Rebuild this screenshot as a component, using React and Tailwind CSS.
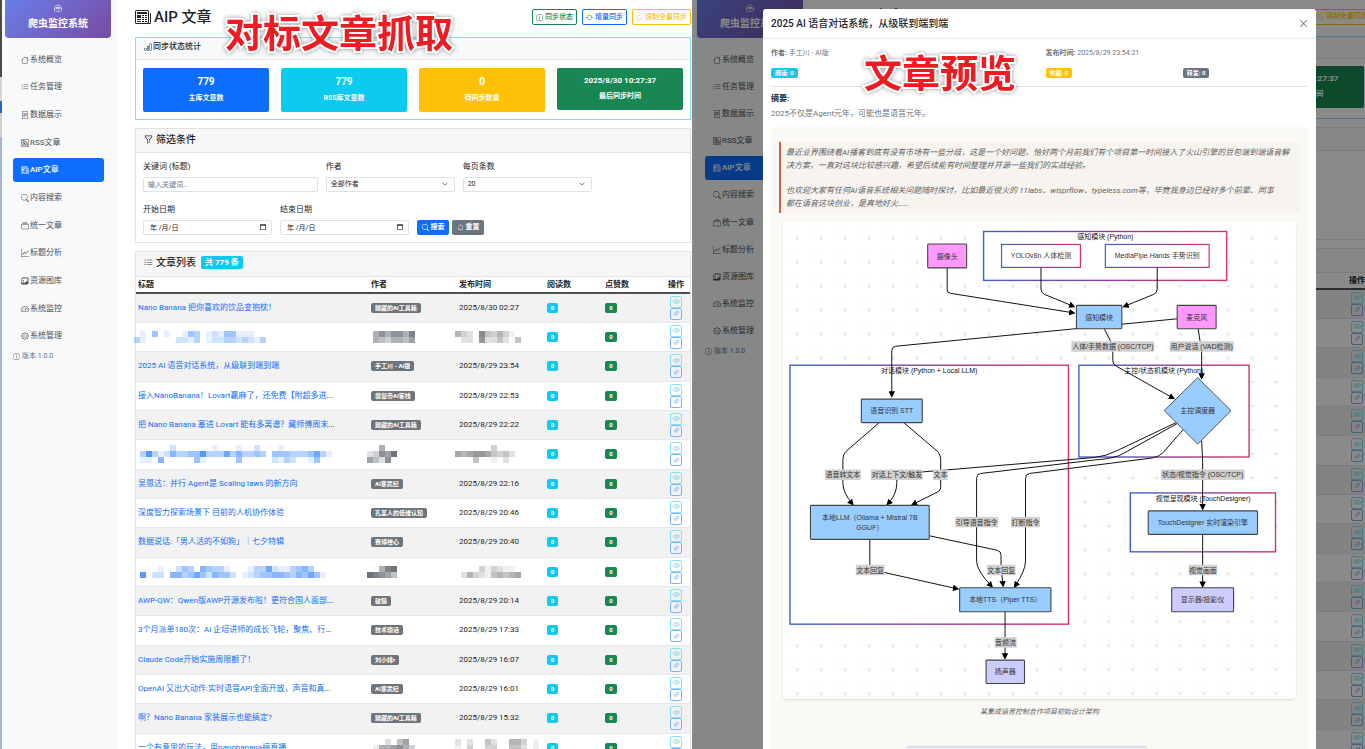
import { useId } from "react";
import {
  BsArrowClockwise,
  BsArrowCounterclockwise,
  BsArrowRepeat,
  BsBarChart,
  BsCalendar,
  BsChevronDown,
  BsCollection,
  BsEye,
  BsFileText,
  BsFunnel,
  BsGear,
  BsGraphUp,
  BsHouse,
  BsImages,
  BsInfoCircle,
  BsLink45Deg,
  BsListTask,
  BsListUl,
  BsNewspaper,
  BsRobot,
  BsRss,
  BsSearch,
  BsSpeedometer2,
  BsXLg,
} from "react-icons/bs";

const NAV = [
  [BsHouse, "系统概览"],
  [BsListTask, "任务管理"],
  [BsFileText, "数据展示"],
  [BsRss, "RSS文章"],
  [BsNewspaper, "AIP文章"],
  [BsSearch, "内容搜索"],
  [BsCollection, "统一文章"],
  [BsGraphUp, "标题分析"],
  [BsImages, "资源图库"],
  [BsSpeedometer2, "系统监控"],
  [BsGear, "系统管理"],
];

const STATS = [
  ["779", "主库文章数", "bg-[#0d6efd] h-11"],
  ["779", "RSS库文章数", "bg-[#0dcaf0] h-11"],
  ["0", "待同步数量", "bg-[#ffc107] h-11"],
];

// Masked rows hold digit grids: each digit is the opacity of one mosaic cell.
const ROWS = [
  { title: "Nano Banana 把你喜欢的饮品变抱枕！", author: "歸藏的AI工具箱", date: "2025/8/30 02:27" },
  {
    mask: {
      title: ["0104010014301214411100", "3100000221301223323213"],
      author: ["05757758", "05435546"],
      date: ["53208435310", "02207224204"],
    },
  },
  { title: "2025 AI 语音对话系统，从级联到端到端", author: "手工川 - AI版", date: "2025/8/29 23:54" },
  { title: "接入NanoBanana！Lovart赢麻了，还免费【附超多进", more: true, author: "袋鼠帝AI客栈", date: "2025/8/29 22:53" },
  { title: "把 Nano Banana 塞进 Lovart 能有多离谱？藏师傅周末", more: true, author: "歸藏的AI工具箱", date: "2025/8/29 22:22" },
  {
    mask: {
      title: ["000000200000010001002000100000000", "037312533447333635334304443334631", "011050000041000004000002132001400"],
      author: ["00500", "23769", "64270"],
      date: ["0000003000", "6567764342", "0004001020"],
    },
  },
  { title: "吴恩达：并行 Agent是 Scaling laws 的新方向", author: "AI寒武纪", date: "2025/8/29 22:16" },
  { title: "深度智力探索场景下 目前的人机协作体验", author: "孔某人的低维认知", date: "2025/8/29 20:46" },
  { title: "数据说话:「男人活的不如狗」｜七夕特辑", author: "赛博禅心", date: "2025/8/29 20:40" },
  {
    mask: {
      title: ["00001002430543310001336211345300", "07022055346425442012344554354641"],
      author: ["00589", "98764"],
      date: ["00003132110", "02532145456"],
    },
  },
  { title: "AWP-QW：Qwen版AWP开源发布啦！更符合国人面部", more: true, author: "破狼", date: "2025/8/29 20:14" },
  { title: "3个月派单180次：AI 企培讲师的成长飞轮，聚焦、行", more: true, author: "技术琐话", date: "2025/8/29 17:33" },
  { title: "Claude Code开始实施周限额了！", author: "刘小排r", date: "2025/8/29 16:07" },
  { title: "OpenAI 又出大动作:实时语音API全面开放，声音和真", more: true, author: "AI寒武纪", date: "2025/8/29 16:01" },
  { title: "啊？Nano Banana 家装展示也能搞定?", author: "歸藏的AI工具箱", date: "2025/8/29 15:32" },
  {
    title: "一个有意思的玩法，用nanobanana搞直播",
    mask: {
      author: ["00020460", "01556753", "01445643"],
      date: ["20200420055301", "10300330044201", "00200220033100"],
    },
  },
];

function Mosaic({ grid, color }) {
  const w = grid[0].length * 6;
  const h = grid.length * 6;
  return (
    <svg width={w} height={h} viewBox={`0 0 ${w} ${h}`} className={`-ml-1 block max-w-none ${color}`} shapeRendering="crispEdges" aria-hidden="true">
      {grid.map((line, y) =>
        line.split("").map((v, x) =>
          v === "0" ? null : (
            <rect key={`${x}-${y}`} x={x * 6} y={y * 6} width="6" height="6" fill="currentColor" opacity={Number(v) / 10} />
          )
        )
      )}
    </svg>
  );
}

function Sidebar({ compact }) {
  return (
    <aside className="w-[115px] shrink-0 bg-[#f8f9fa]">
      <div className="ml-[3px] flex h-[38px] w-[106px] flex-col items-center rounded-b bg-linear-135 from-[#667eea] to-[#764ba2] pt-1 text-white">
        <BsRobot className="size-2 opacity-80" />
        <span className="mt-1 text-[10px] leading-4 font-bold">爬虫监控系统</span>
      </div>
      <nav className={`ml-[11px] flex w-[91px] flex-col justify-between ${compact ? "mt-[9px] h-[296px]" : "mt-[9px] h-[301px]"}`}>
        {NAV.map(([Icon, label]) => (
          <a
            key={label}
            href="#"
            className={`flex h-6 items-center gap-px rounded-[3px] pt-px pl-2 text-[8px] ${
              label === "AIP文章" ? "bg-[#0d6efd] font-medium text-white" : "text-[#495057]"
            }`}
          >
            <Icon className="size-2" />
            {label}
          </a>
        ))}
      </nav>
      <p className="ml-[11px] flex h-4 items-center gap-[2px] text-[7px] text-[#6c757d]">
        <BsInfoCircle className="size-[7px]" />
        版本 1.0.0
      </p>
    </aside>
  );
}

const FIELD = "h-[15px] w-full appearance-none rounded-[2px] border border-[#dee2e6] bg-white px-1 text-[7px] text-[#212529]";

function Field({ label, span, children }) {
  const id = useId();
  return (
    <div className={span}>
      <label htmlFor={id} className="mb-1 block text-[8px] leading-3">
        {label}
      </label>
      <div className="relative flex">{children(id)}</div>
    </div>
  );
}

function Filters({ compact }) {
  return (
    <section className="border border-[#e3e3e3] bg-white">
      <h2 className={`flex items-center gap-[3px] border-b border-[#e3e3e3] bg-[#f7f7f7] px-2 pb-[2px] text-[10px] font-medium ${compact ? "h-[23px]" : "h-6"}`}>
        <BsFunnel className="size-[9px]" />
        筛选条件
      </h2>
      <form className={`grid grid-cols-12 gap-x-2 px-[7px] pt-2 pb-[7px] ${compact ? "gap-y-[11px]" : "gap-y-3"}`}>
        <Field label="关键词 (标题)" span="col-span-4">
          {(id) => <input id={id} placeholder="输入关键词..." className={`${FIELD} placeholder:text-[#6c757d]`} />}
        </Field>
        <Field label="作者" span="col-span-3">
          {(id) => (
            <>
              <select id={id} className={FIELD}>
                <option>全部作者</option>
              </select>
              <BsChevronDown className="absolute top-1 right-[7px] size-[6px]" />
            </>
          )}
        </Field>
        <Field label="每页条数" span="col-span-3">
          {(id) => (
            <>
              <select id={id} className={FIELD}>
                <option>20</option>
              </select>
              <BsChevronDown className="absolute top-1 right-[7px] size-[6px]" />
            </>
          )}
        </Field>
        {["开始日期", "结束日期"].map((label, i) => (
          <Field key={label} label={label} span={i === 0 ? "col-span-3 col-start-1" : "col-span-3"}>
            {(id) => (
              <>
                <input id={id} placeholder="年 /月/日" className={`${FIELD} pl-[6px] placeholder:text-[#212529]`} />
                <BsCalendar className="absolute top-1 right-[6px] size-[6px] stroke-1" />
              </>
            )}
          </Field>
        ))}
        <div className="col-span-3 flex items-end gap-[3px] text-[7px] font-bold text-white">
          <button type="button" className="flex h-[15px] w-8 items-center justify-center gap-[2px] rounded-[2px] bg-[#0d6efd]">
            <BsSearch className="size-[7px]" />
            搜索
          </button>
          <button type="button" className="flex h-[15px] w-8 items-center justify-center gap-[2px] rounded-[2px] bg-[#6c757d]">
            <BsArrowCounterclockwise className="size-[7px]" />
            重置
          </button>
        </div>
      </form>
    </section>
  );
}

function ArticleRow({ row }) {
  const mask = row.mask || {};
  return (
    <tr className="h-[29px] border-b border-[#e4e6e8] odd:bg-[#f2f2f2] nth-[3n]:h-[30px]">
      <td className="pl-[2px]">
        {row.title ? (
          <>
            <a href="#" className="text-[#0d6efd]">
              {row.title}
            </a>
            {row.more && "..."}
          </>
        ) : (
          <Mosaic grid={mask.title} color="text-[#0d6efd]" />
        )}
      </td>
      <td className="pl-[2px]">
        {row.author ? (
          <span className="block h-[10px] w-fit rounded-[2px] bg-[#6c757d] px-1 text-[6px] leading-[10px] font-bold text-white">{row.author}</span>
        ) : (
          <Mosaic grid={mask.author} color="text-[#5c646c]" />
        )}
      </td>
      <td className="pl-[2px]">{row.date || <Mosaic grid={mask.date} color="text-[#6b6b6b]" />}</td>
      <td className="pl-[2px]">
        <span className="block h-[10px] w-[11px] rounded-[2px] bg-[#0dcaf0] text-center text-[6px] leading-[10px] font-bold text-white">0</span>
      </td>
      <td className="pl-[2px]">
        <span className="block h-[10px] w-3 rounded-[2px] bg-[#198754] text-center text-[6px] leading-[10px] font-bold text-white">0</span>
      </td>
      <td>
        <div className="flex flex-col items-start pl-1">
          <button type="button" aria-label="预览" className="grid size-3 place-items-center rounded-[2px] border border-[#86e4f7] text-[#3fd3f2]">
            <BsEye className="size-[7px]" />
          </button>
          <button type="button" aria-label="链接" className="grid size-3 place-items-center rounded-[2px] border border-[#7fb1fe] text-[#3d8bfd]">
            <BsLink45Deg className="size-[7px]" />
          </button>
        </div>
      </td>
    </tr>
  );
}

function AdminPage({ compact }) {
  return (
    <>
      <Sidebar compact={compact} />
      <main className="min-w-0 flex-1 pl-[18px] text-[#212529]">
        <header className={`flex items-center justify-between pb-[3px] ${compact ? "h-9" : "h-[37px]"}`}>
          <h1 className="flex items-center gap-[3px] text-[15px] font-medium">
            <BsNewspaper className="size-4" />
            AIP 文章
          </h1>
          <div className="flex gap-[5px] text-[7px] font-medium whitespace-nowrap">
            <button type="button" className="flex h-4 items-center gap-[2px] rounded-[2px] border border-[#198754] px-[3px] text-[#198754]">
              <BsInfoCircle className="size-[7px]" />
              同步状态
            </button>
            <button type="button" className="flex h-4 items-center gap-[2px] rounded-[2px] border border-[#0d6efd] px-[3px] text-[#0d6efd]">
              <BsArrowRepeat className="size-[7px]" />
              增量同步
            </button>
            <button type="button" className="flex h-4 items-center gap-[2px] rounded-[2px] border border-[#ffc107] px-[3px] text-[#ffc107]">
              <BsArrowClockwise className="size-[7px]" />
              强制全量同步
            </button>
          </div>
        </header>
        <section className="border border-[#86dff0] bg-white">
          <h2 className="flex h-[22px] items-center gap-px border-b border-[#e3e5e7] bg-[#f8f9fa] px-2 pb-1 text-[8px] font-medium">
            <BsBarChart className="size-2" />
            同步状态统计
          </h2>
          <div className={`grid grid-cols-4 items-start gap-3 px-[7px] text-center text-white ${compact ? "pt-[7px] pb-2" : "pt-2 pb-[7px]"}`}>
            {STATS.map(([value, label, tone]) => (
              <div key={label} className={`rounded-[2px] pt-2 ${tone}`}>
                <p className="text-[10px] leading-3 font-bold">{value}</p>
                <p className="mt-1 text-[7px] leading-3 font-bold">{label}</p>
              </div>
            ))}
            <div className="h-[42px] rounded-[2px] bg-[#198754] pt-[7px]">
              <p className="text-[8px] leading-3 font-bold">2025/8/30 10:27:37</p>
              <p className="mt-[3px] text-[7px] leading-3 font-bold">最后同步时间</p>
            </div>
          </div>
        </section>
        <div className="mt-2">
          <Filters compact={compact} />
        </div>
        <section className="mt-2 border-x border-t border-[#e3e3e3] bg-white">
          <h2 className={`flex items-center gap-[3px] border-b border-[#e3e3e3] bg-[#f7f7f7] px-2 pb-1 text-[10px] font-medium ${compact ? "h-[24px]" : "h-[25px]"}`}>
            <BsListUl className="size-[9px]" />
            文章列表
            <span className="ml-[2px] h-[13px] rounded-[2px] bg-[#0dcaf0] px-1 text-[8px] leading-[13px] font-bold text-white">共 779 条</span>
          </h2>
          <table className="w-full table-fixed border-collapse text-left text-[8px] leading-3 whitespace-nowrap">
            <thead>
              <tr className="h-4 border-b-2 border-[#4d5154] font-bold">
                <th className="pl-[2px]">标题</th>
                <th className="w-[88px] pl-[2px]">作者</th>
                <th className="w-[88px] pl-[2px]">发布时间</th>
                <th className="w-[58px] pl-[2px]">阅读数</th>
                <th className="w-[63px] pl-[2px]">点赞数</th>
                <th className="w-[24px] pl-[2px]">操作</th>
              </tr>
            </thead>
            <tbody>
              {ROWS.map((row, i) => (
                <ArticleRow key={i} row={row} />
              ))}
            </tbody>
          </table>
        </section>
      </main>
    </>
  );
}

// x, y, width, height, fill, text lines
const NODES = [
  [928, 244, 39, 24, "#ff99ff", ["摄像头"]],
  [1077, 305.5, 45.5, 23.5, "#99ccff", ["感知模块"]],
  [1178, 305.5, 39, 23.5, "#ff99ff", ["麦克风"]],
  [861.5, 399.5, 61, 23.5, "#99ccff", ["语音识别 STT"]],
  [810.5, 506, 119, 34, "#99ccff", ["本地LLM（Ollama + Mistral 7B", "GGUF）"]],
  [960, 588.5, 91.5, 24, "#99ccff", ["本地TTS（Piper TTS）"]],
  [986.5, 661, 38.5, 23.5, "#ccccff", ["扬声器"]],
  [1149, 511.5, 109.5, 23.5, "#99ccff", ["TouchDesigner 实时渲染引擎"]],
  [1172.5, 588.5, 62, 24, "#ccccff", ["显示器/投影仪"]],
];

const CLUSTERS = [
  [984, 231.5, 243.5, 49, 1106, 239.5, "感知模块 (Python)"],
  [790, 365.5, 279, 259.5, 929.5, 373, "对话模块 (Python + Local LLM)"],
  [1079.5, 365.5, 170.5, 92, 1164.5, 373, "主控/状态机模块 (Python)"],
  [1131, 493.5, 145.5, 59, 1204, 501.5, "视觉呈现模块 (TouchDesigner)"],
];

const LABELS = [
  [1072, 341.5, 83, "人体/手势数据 (OSC/TCP)"],
  [1170.5, 341.5, 64, "用户说话 (VAD检测)"],
  [825, 470, 36, "语音转文本"],
  [871, 470, 52, "对话上下文/触发"],
  [933.5, 470, 14.5, "文本"],
  [1161.5, 470, 84, "状态/视觉指令 (OSC/TCP)"],
  [955.5, 517.5, 43, "引导语音指令"],
  [1011.5, 517.5, 29, "打断指令"],
  [856, 565.5, 28.5, "文本回复"],
  [987.5, 565.5, 28.5, "文本回复"],
  [995, 638, 22, "音频流"],
  [1189.5, 565.5, 28.5, "视觉画面"],
];

const ARROWS = [
  "M947.5 268 V290 Q947.5 293 951 293.5 L1074 313",
  "M1041.5 268 V289 Q1041.5 293 1045 294.5 L1074 306.5",
  "M1158 268 V289 Q1158 293 1154.5 294.5 L1125 306.5",
  "M1178 319 L896 346.5 Q892 347 892 351 V396",
  "M1105 329 L1113.5 346 V361 Q1113.5 365 1117 366.5 L1174 398.5",
  "M1199 329 L1202.5 352 V378",
  "M879.5 423 L846 452 Q843 455 843 460 V484 Q843 493 852.5 504.5",
  "M1177 423 L1118 451 Q1106 457 1095 458 L898.5 474.5 Q897 475 897 480 V484 Q897 495 888 504.5",
  "M904 423 L938 452 Q941 455 941 460 V488 Q941 491 938 492.5 L913 505",
  "M1178 424 L1124 454 Q1116 459 1095 460.5 L981 474 Q977 474.5 977 479 V562 Q977 571 992 587",
  "M1184 430 L1164 453 Q1160 457 1153 458.5 L1030 474 Q1026 474.5 1026 479 V562 Q1026 571 1015.5 587",
  "M1202.5 441 L1203.5 462 V509",
  "M930 536.5 L998 551 Q1001.5 552 1001.5 556 V568 L1003.5 586",
  "M870 540 V570 L957.5 589.5",
  "M1005.5 612.5 V658.5",
  "M1203.5 535 V586.5",
];

function Diagram() {
  return (
    <svg viewBox="783 221 514 479" className="block w-full" role="img" fontFamily='"Liberation Sans","Noto Sans CJK SC",sans-serif' fontSize="7" textAnchor="middle" fill="#333">
      <defs>
        <linearGradient id="edge">
          <stop offset="0" stopColor="#3b63c8" />
          <stop offset="0.5" stopColor="#8a3f9c" />
          <stop offset="1" stopColor="#d6336c" />
        </linearGradient>
        <pattern id="grid" x="785.3" y="226.5" width="24" height="24" patternUnits="userSpaceOnUse">
          <path d="M12 10.2v3.6M10.2 12h3.6" stroke="#d3e4de" strokeWidth="1" />
          <g fill="#e3ebe7">
            <circle cx="0.6" cy="0.6" r="0.6" />
            <circle cx="12" cy="0.6" r="0.6" />
            <circle cx="0.6" cy="12" r="0.6" />
          </g>
        </pattern>
        <marker id="head" viewBox="0 0 6 6" refX="4" refY="3" markerWidth="6.5" markerHeight="6.5" markerUnits="userSpaceOnUse" orient="auto">
          <path d="M0 0L6 3L0 6z" fill="#000" />
        </marker>
      </defs>
      <rect x="783" y="221" width="514" height="479" fill="url(#grid)" />
      {CLUSTERS.map(([x, y, w, h]) => (
        <rect key={x} x={x} y={y} width={w} height={h} fill="#fff" stroke="url(#edge)" strokeWidth="1.4" />
      ))}
      {[
        [1002, 79, "YOLOv8n 人体检测"],
        [1106, 104, "MediaPipe Hands 手势识别"],
      ].map(([x, w, t]) => (
        <g key={x}>
          <rect x={x} y="244.5" width={w} height="23" fill="#fff" stroke="url(#edge)" strokeWidth="1.2" />
          <text x={x + w / 2} y="258.5">{t}</text>
        </g>
      ))}
      {CLUSTERS.map(([, , , , x, y, t]) => (
        <text key={t} x={x} y={y} fill="#111">{t}</text>
      ))}
      {ARROWS.map((d) => (
        <path key={d} d={d} fill="none" stroke="#111" strokeWidth="1" markerEnd="url(#head)" />
      ))}
      {NODES.map(([x, y, w, h, fill, lines]) => (
        <g key={lines[0]}>
          <rect x={x} y={y} width={w} height={h} rx="0.8" fill={fill} stroke="#444" strokeWidth="1.1" />
          {lines.map((t, i) => (
            <text key={t} x={x + w / 2} y={y + h / 2 + 2.6 + (i - (lines.length - 1) / 2) * 10.5}>{t}</text>
          ))}
        </g>
      ))}
      <path d="M1198.5 378L1232 411L1198.5 444.5L1165 411z" fill="#99ccff" stroke="#333" strokeWidth="0.8" />
      <text x="1198.5" y="413.5">主控调度器</text>
      {LABELS.map(([x, y, w, t]) => (
        <g key={`${x}-${y}`}>
          <rect x={x} y={y} width={w} height="10.5" fill="#d0d0d0" />
          <text x={x + w / 2} y={y + 8}>{t}</text>
        </g>
      ))}
    </svg>
  );
}

const CHIP = "h-[10px] w-fit rounded-[2px] px-1 text-[6px] leading-[10px] font-bold text-white";

function ArticleDialog() {
  return (
    <div role="dialog" aria-label="文章预览" className="h-fit w-full rounded-t-[3px] bg-white text-[#212529]">
      <div className="flex h-[30px] items-center justify-between border-b border-[#e9ecef] px-2">
        <h2 className="text-[10px] font-medium">2025 AI 语音对话系统，从级联到端到端</h2>
        <button type="button" aria-label="关闭" className="text-[#666]">
          <BsXLg className="size-[9px] stroke-[0.5]" />
        </button>
      </div>
      <div className="px-2 pt-2">
        <div className="border-b border-[#dee2e6] pb-2">
          <div className="-mr-3 grid grid-cols-4 text-[7px] leading-3 text-[#6c757d]">
            <p className="col-span-2"><b>作者:</b> 手工川 - AI版</p>
            <p className="col-span-2"><b>发布时间:</b> 2025/8/29 23:54:21</p>
            <div className="col-span-2 mt-[9px]"><p className={`${CHIP} bg-[#0dcaf0]`}>阅读: 0</p></div>
            <div className="mt-[9px]"><p className={`${CHIP} bg-[#ffc107]`}>收藏: 0</p></div>
            <div className="mt-[9px]"><p className={`${CHIP} bg-[#6c757d]`}>转发: 0</p></div>
          </div>
        </div>
        <h3 className="mt-[6px] text-[8px] leading-3 font-bold">摘要:</h3>
        <p className="mt-[3px] text-[8px] leading-3 text-[#6c757d]">2025不仅是Agent元年，可能也是语音元年。</p>
        <article className="mt-[7px] rounded-[6px] bg-[#faf9f5] px-2 pt-[15px] text-[#5f5f5f]">
          <blockquote className="flex flex-col gap-3 border-l-2 border-[#c96442] bg-[#f7f4ef] pt-1 pr-1 pb-[3px] pl-[5px] text-[8px] leading-[13px] italic">
            <p>
              最近业界围绕着AI播客到底有没有市场有一些分歧，这是一个好问题，恰好两个月前我们有个项目第一时间接入了火山引擎的豆包端到端语音解决方案，一直对这块比较感兴趣，希望后续能有时间整理并开源一些我们的实战经验。
            </p>
            <p>
              也欢迎大家有任何AI语音系统相关问题随时探讨，比如最近很火的 11labs、wisprflow、typeless.com等，毕竟我身边已经好多个前辈、同事
              <br />
              都在语音这块创业，是真地好火……
            </p>
          </blockquote>
          <figure className="mx-1 mt-2">
            <div className="overflow-hidden rounded bg-white shadow">
              <Diagram />
            </div>
            <figcaption className="mt-[7px] text-center text-[7px] leading-3 italic">某集成语音控制合作项目初始设计架构</figcaption>
          </figure>
          <div className="mt-7 ml-32 h-10 w-[46%] rounded-[3px] border-t-2 border-[#d5dce8] bg-[#f7f9fc] shadow-sm" />
        </article>
      </div>
    </div>
  );
}

const CAPTION =
  "absolute text-[38px] leading-10 font-bold whitespace-nowrap text-[#ee1c22] [-webkit-text-stroke:4px_white] [paint-order:stroke_fill] drop-shadow-[0_0_2px_rgba(0,0,0,0.4)]";

export default function App() {
  return (
    <div className="flex h-screen overflow-hidden bg-white font-[Roboto,'Noto_Sans_CJK_SC',sans-serif]" lang="zh-CN">
      <div className="relative flex w-[50.7%] overflow-hidden pr-px">
        <div className="flex w-[2px] shrink-0 flex-col">
          <div className="h-[77px] bg-[#4a4a4c]" />
          <div className="h-6 bg-[#d5d5d5]" />
          <div className="h-3 bg-[#2f62c9]" />
          <div className="h-6 bg-[#cfcfcf]" />
          <div className="flex-1 bg-[#a5b3d0]" />
        </div>
        <AdminPage />
        <p className={`${CAPTION} top-[14px] left-[225px]`}>对标文章抓取</p>
      </div>
      <div className="relative flex-1 overflow-hidden">
        <div className="flex w-[calc(100%+7px)] pl-[2px]" inert>
          <AdminPage compact />
        </div>
        <div className="absolute inset-0 flex bg-black/46 pt-[9px] pr-[49px] pl-[71px]">
          <ArticleDialog />
        </div>
        <p className={`${CAPTION} top-[54px] left-[172px]`}>文章预览</p>
      </div>
    </div>
  );
}
